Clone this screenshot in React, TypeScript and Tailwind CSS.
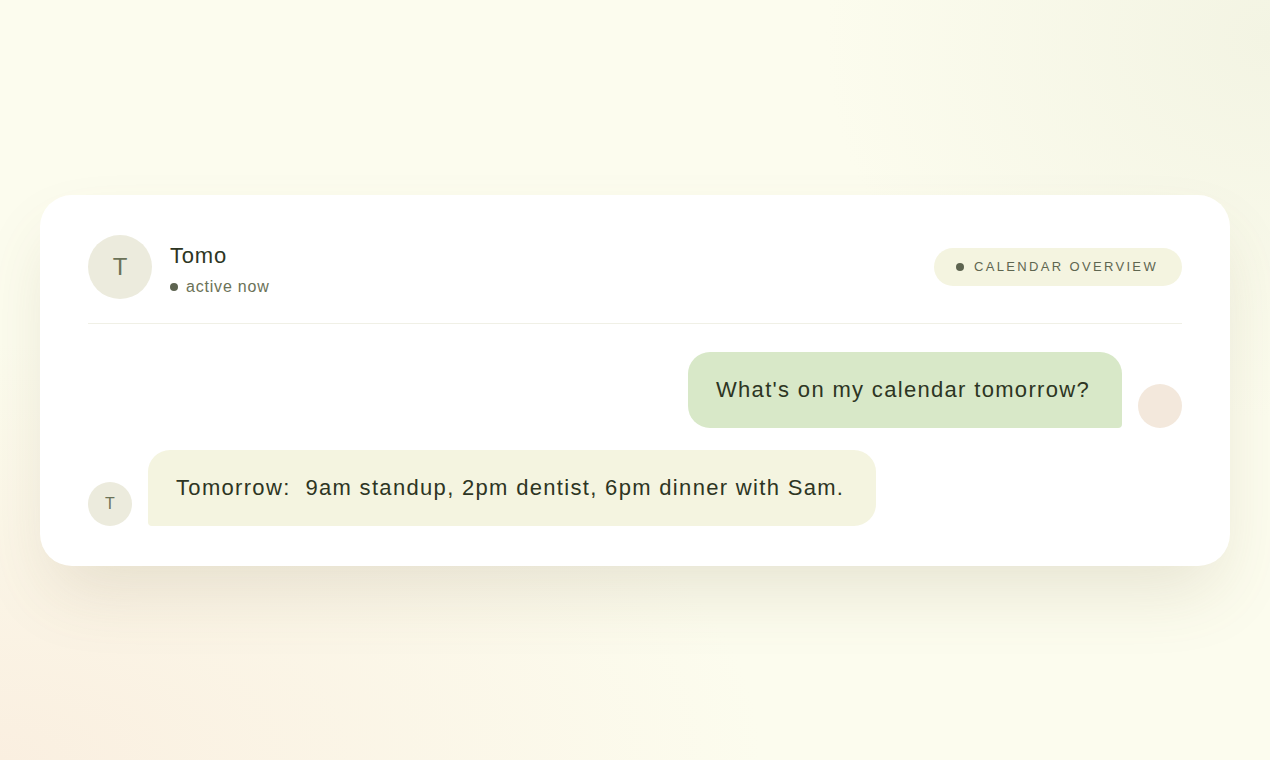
const App = () => {
  return (
    <div
      className="flex min-h-screen items-center justify-center px-10 bg-[#fcfcee]"
      style={{
        backgroundImage:
          "radial-gradient(ellipse 60% 55% at 0% 100%, #faefe0 0%, rgba(250,239,224,0) 100%), radial-gradient(ellipse 35% 50% at 100% 5%, #f3f4e3 0%, rgba(243,244,227,0) 100%)",
        fontFamily: '"Liberation Sans", Arial, sans-serif',
      }}
    >
      <div className="w-full rounded-[32px] bg-white px-12 pb-10 pt-10 shadow-[0_34px_70px_-12px_rgba(120,100,60,0.16)]">
        <div className="flex items-center justify-between border-b border-[#f0f0e6] pb-6">
          <div className="flex items-center gap-[18px]">
            <div className="flex h-16 w-16 items-center justify-center rounded-full bg-[#ecebdd] text-[24px] text-[#6b7258]">
              T
            </div>
            <div className="mt-1.5 flex flex-col tracking-[0.05em]">
              <span className="text-[22px] leading-7 text-[#2d3523]">Tomo</span>
              <span className="mt-[7px] flex items-center gap-2 text-[16px] leading-5 text-[#6b7257]">
                <span className="h-2 w-2 rounded-full bg-[#5d6450]" />
                active now
              </span>
            </div>
          </div>
          <div className="flex h-[38px] items-center gap-[10px] rounded-full bg-[#f4f4e0] pl-[22px] pr-6 text-[13px] uppercase tracking-[0.18em] text-[#5e6650]">
            <span className="h-2 w-2 rounded-full bg-[#5d6450]" />
            Calendar overview
          </div>
        </div>

        <div className="mt-7 flex flex-col gap-[22px] text-[22px] leading-7 tracking-[0.06em] text-[#2d3523]">
          <div className="flex items-end justify-end gap-4">
            <div className="rounded-[22px] rounded-br-[4px] bg-[#d8e8c8] py-6 pl-7 pr-8">
              What's on my calendar tomorrow?
            </div>
            <div className="h-11 w-11 shrink-0 rounded-full bg-[#f3e8dc]" />
          </div>
          <div className="flex items-end gap-4">
            <div className="flex h-11 w-11 shrink-0 items-center justify-center rounded-full bg-[#ecebdd] text-[16px] tracking-normal text-[#6b7258]">
              T
            </div>
            <div className="whitespace-pre-wrap rounded-[22px] rounded-bl-[4px] bg-[#f4f4e0] py-6 pl-7 pr-8">
              {"Tomorrow:  9am standup, 2pm dentist, 6pm dinner with Sam."}
            </div>
          </div>
        </div>
      </div>
    </div>
  );
};

export default App;
